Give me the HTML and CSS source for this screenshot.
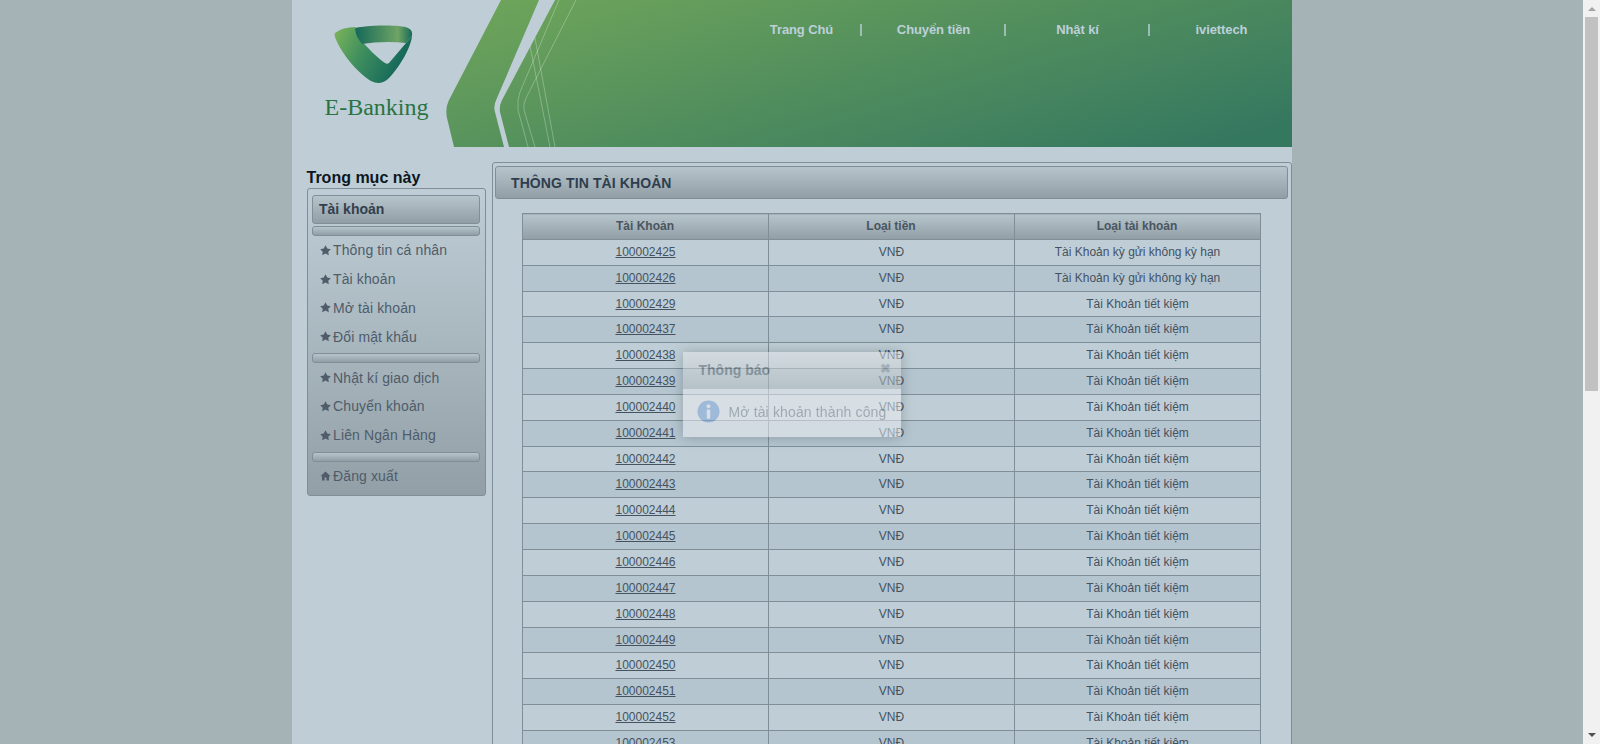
FILE: index.html
```html
<!DOCTYPE html>
<html lang="en">
<head>
  <meta charset="UTF-8" />
  <title>E-Banking</title>
  <link rel="stylesheet" href="styles.css">
</head>
<body>

  <div class="viewport">
    <div class="wrap">

      <!-- Header -->
      <header class="header">
        <svg class="header-art" viewBox="0 0 1000 147" aria-hidden="true">
          <defs>
            <linearGradient id="headGrad" gradientUnits="userSpaceOnUse" x1="190" y1="-10" x2="285" y2="325">
              <stop offset="0" stop-color="#70a65a"/>
              <stop offset="1" stop-color="#357860"/>
            </linearGradient>
          </defs>
          <path fill="url(#headGrad)" d="M209 0H247L205 98Q201 106 203 112L212 147H162L155 118Q153 108 157 100Z"/>
          <path fill="url(#headGrad)" d="M263 0H1000V147H217L208 112Q207 106 210 100Z"/>
          <g fill="none" stroke="#fff" stroke-opacity=".28" stroke-width="1">
            <path d="M267 0L228 92Q225 100 226 110L236 147"/>
            <path d="M284 0L234 98Q231 104 232 110L243 147"/>
            <path d="M243 38L263 147"/>
            <path d="M238 46L258 147"/>
          </g>
        </svg>

        <div class="brand">
          <svg class="logo" viewBox="0 0 100 70" aria-hidden="true">
            <defs>
              <linearGradient id="logoA" x1="0" y1="0" x2="1" y2=".35">
                <stop offset="0" stop-color="#7db55a"/>
                <stop offset=".45" stop-color="#3f8f5e"/>
                <stop offset="1" stop-color="#136659"/>
              </linearGradient>
              <linearGradient id="logoB" x1="0" y1="0" x2="1" y2="0">
                <stop offset="0" stop-color="#14685a"/>
                <stop offset=".75" stop-color="#6ea464"/>
                <stop offset="1" stop-color="#17695a"/>
              </linearGradient>
            </defs>
            <path fill="url(#logoA)" d="M10 14Q17 8 31 8L30 12C33 18 45 33 60 44Q62 45.500 64 44L81 24L87 17C86 28 75 48 63 60Q55 67 46 62C34 55 16 35 10 18Q9 15 10 14Z"/>
            <path fill="url(#logoB)" d="M30 10Q31 8 36 8C55 6 75 6 83 9Q88 11 87 17L81 24C65 22 50 23 37 25Q30 16 30 10Z"/>
          </svg>
          <div class="brand-name">E-Banking</div>
        </div>

        <nav class="topnav">
          <a href="#">Trang Chú</a>
          <a href="#">Chuyển tiền</a>
          <a href="#">Nhật kí</a>
          <a href="#">iviettech</a>
        </nav>
      </header>

      <div class="content">

        <!-- Sidebar -->
        <aside class="sidebar">
          <h3>Trong mục này</h3>
          <div class="side-box">
            <div class="side-title">Tài khoản</div>
            <div class="side-bar"></div>
            <a class="side-link" href="#"><svg class="ico" viewBox="0 0 12 12"><path d="M6 .3L7.900 3.900L11.800 4.500L9 7.300L9.600 11.300L6 9.400L2.400 11.300L3 7.300L.2 4.500L4.100 3.900Z"/></svg>Thông tin cá nhân</a>
            <a class="side-link" href="#"><svg class="ico" viewBox="0 0 12 12"><path d="M6 .3L7.900 3.900L11.800 4.500L9 7.300L9.600 11.300L6 9.400L2.400 11.300L3 7.300L.2 4.500L4.100 3.900Z"/></svg>Tài khoản</a>
            <a class="side-link" href="#"><svg class="ico" viewBox="0 0 12 12"><path d="M6 .3L7.900 3.900L11.800 4.500L9 7.300L9.600 11.300L6 9.400L2.400 11.300L3 7.300L.2 4.500L4.100 3.900Z"/></svg>Mở tài khoản</a>
            <a class="side-link" href="#"><svg class="ico" viewBox="0 0 12 12"><path d="M6 .3L7.900 3.900L11.800 4.500L9 7.300L9.600 11.300L6 9.400L2.400 11.300L3 7.300L.2 4.500L4.100 3.900Z"/></svg>Đổi mật khẩu</a>
            <div class="side-bar"></div>
            <a class="side-link" href="#"><svg class="ico" viewBox="0 0 12 12"><path d="M6 .3L7.900 3.900L11.800 4.500L9 7.300L9.600 11.300L6 9.400L2.400 11.300L3 7.300L.2 4.500L4.100 3.900Z"/></svg>Nhật kí giao dịch</a>
            <a class="side-link" href="#"><svg class="ico" viewBox="0 0 12 12"><path d="M6 .3L7.900 3.900L11.800 4.500L9 7.300L9.600 11.300L6 9.400L2.400 11.300L3 7.300L.2 4.500L4.100 3.900Z"/></svg>Chuyển khoản</a>
            <a class="side-link" href="#"><svg class="ico" viewBox="0 0 12 12"><path d="M6 .3L7.900 3.900L11.800 4.500L9 7.300L9.600 11.300L6 9.400L2.400 11.300L3 7.300L.2 4.500L4.100 3.900Z"/></svg>Liên Ngân Hàng</a>
            <div class="side-bar"></div>
            <a class="side-link" href="#"><svg class="ico" viewBox="0 0 12 12"><path d="M6 1.500L11.500 6.800H9.800V11.500H7V8.300H5V11.500H2.200V6.800H.5Z"/></svg>Đăng xuất</a>
          </div>
        </aside>

        <!-- Account list -->
        <section class="panel">
          <h2 class="panel-head">THÔNG TIN TÀI KHOẢN</h2>
          <table class="accounts">
            <thead>
              <tr><th>Tài Khoản</th><th>Loại tiền</th><th>Loại tài khoản</th></tr>
            </thead>
            <tbody>
              <tr><td><a href="#">100002425</a></td><td>VNĐ</td><td>Tài Khoản kỳ gửi không kỳ hạn</td></tr>
              <tr><td><a href="#">100002426</a></td><td>VNĐ</td><td>Tài Khoản kỳ gửi không kỳ hạn</td></tr>
              <tr><td><a href="#">100002429</a></td><td>VNĐ</td><td>Tài Khoản tiết kiệm</td></tr>
              <tr><td><a href="#">100002437</a></td><td>VNĐ</td><td>Tài Khoản tiết kiệm</td></tr>
              <tr><td><a href="#">100002438</a></td><td>VNĐ</td><td>Tài Khoản tiết kiệm</td></tr>
              <tr><td><a href="#">100002439</a></td><td>VNĐ</td><td>Tài Khoản tiết kiệm</td></tr>
              <tr><td><a href="#">100002440</a></td><td>VNĐ</td><td>Tài Khoản tiết kiệm</td></tr>
              <tr><td><a href="#">100002441</a></td><td>VNĐ</td><td>Tài Khoản tiết kiệm</td></tr>
              <tr><td><a href="#">100002442</a></td><td>VNĐ</td><td>Tài Khoản tiết kiệm</td></tr>
              <tr><td><a href="#">100002443</a></td><td>VNĐ</td><td>Tài Khoản tiết kiệm</td></tr>
              <tr><td><a href="#">100002444</a></td><td>VNĐ</td><td>Tài Khoản tiết kiệm</td></tr>
              <tr><td><a href="#">100002445</a></td><td>VNĐ</td><td>Tài Khoản tiết kiệm</td></tr>
              <tr><td><a href="#">100002446</a></td><td>VNĐ</td><td>Tài Khoản tiết kiệm</td></tr>
              <tr><td><a href="#">100002447</a></td><td>VNĐ</td><td>Tài Khoản tiết kiệm</td></tr>
              <tr><td><a href="#">100002448</a></td><td>VNĐ</td><td>Tài Khoản tiết kiệm</td></tr>
              <tr><td><a href="#">100002449</a></td><td>VNĐ</td><td>Tài Khoản tiết kiệm</td></tr>
              <tr><td><a href="#">100002450</a></td><td>VNĐ</td><td>Tài Khoản tiết kiệm</td></tr>
              <tr><td><a href="#">100002451</a></td><td>VNĐ</td><td>Tài Khoản tiết kiệm</td></tr>
              <tr><td><a href="#">100002452</a></td><td>VNĐ</td><td>Tài Khoản tiết kiệm</td></tr>
              <tr><td><a href="#">100002453</a></td><td>VNĐ</td><td>Tài Khoản tiết kiệm</td></tr>
            </tbody>
          </table>
        </section>
      </div>
    </div>

    <!-- Notification dialog -->
    <div class="modal">
      <div class="modal-head">
        <span>Thông báo</span>
        <span class="modal-close">&#10006;</span>
      </div>
      <div class="modal-body">
        <svg class="info" viewBox="0 0 24 24" aria-hidden="true">
          <circle cx="12" cy="12" r="11.500" fill="#7fa6dc"/>
          <circle cx="12" cy="6.500" r="2" fill="#eef3f8"/>
          <rect x="10.200" y="10" width="3.600" height="9.500" fill="#eef3f8"/>
        </svg>
        <span>Mở tài khoản thành công</span>
      </div>
    </div>
  </div>

  <!-- Scrollbar -->
  <div class="scrollbar">
    <div class="arrow arrow-up"></div>
    <div class="thumb"></div>
    <div class="arrow arrow-down"></div>
  </div>

</body>
</html>
```

FILE: styles.css
```css
* { box-sizing: border-box; margin: 0; padding: 0; }
html, body { height: 100%; overflow: hidden; }
body { display: flex; background: #a5b3b7; font-family: "Liberation Sans", Arial, sans-serif; color: #45525f; }
a { color: inherit; text-decoration: none; }

.viewport { flex: 1; position: relative; height: 744px; overflow: hidden; }
.wrap { width: 1000px; height: 100%; margin: 0 auto; background: #bfced6; }

/* Header */
.header { position: relative; display: flex; height: 147px; }
.header-art { position: absolute; left: 0; top: 0; width: 1000px; height: 147px; }
.brand { position: relative; width: 427px; padding: 19px 0 0 33px; }
.logo { display: block; width: 100px; height: 70px; }
.brand-name { margin-top: 3px; font: 24px/30px "Liberation Serif", serif; color: #2a7343; }
.topnav { position: relative; display: grid; grid-template-columns: 144px 144px 144px 142px; align-self: flex-start; margin-top: 24px; }
.topnav a { height: 12px; padding-left: 2px; font-size: 13px; font-weight: bold; letter-spacing: -.1px; line-height: 12px; text-align: center; color: #bdd0da; border-right: 2px solid rgba(189, 208, 218, .7); }
.topnav a:first-child { padding-left: 26px; }
.topnav a:last-child { border-right: 0; }

.content { display: grid; grid-template-columns: 179px 800px; column-gap: 6px; padding: 15px 0 0 15px; }

/* Sidebar */
.sidebar h3 { height: 26px; padding-top: 6px; font-size: 16px; line-height: 20px; color: #0c1722; }
.side-box { height: 308px; padding: 6px 4.5px 0; background: linear-gradient(#bfced6, #929fa7); border: 1px solid #7f8e97; border-radius: 3px; }
.side-title { height: 29px; padding-left: 6px; font-size: 14px; font-weight: bold; line-height: 27px; color: #333f4c; background: linear-gradient(#b6c4cc, #919ea6); border: 1px solid #7f8e97; border-radius: 3px; }
.side-bar { height: 10px; margin-top: 2px; background: linear-gradient(#b6c4cc, #919ea6); border: 1px solid #7f8e97; border-radius: 3px; }
.side-link { display: flex; align-items: center; height: 28.8px; padding-left: 8px; font-size: 14px; letter-spacing: .12px; color: #4f5c6a; }
.ico { width: 11px; height: 11px; margin-right: 2px; fill: #4f5c6a; }

/* Account list */
.panel { height: 600px; padding: 3px 3px 0 2.5px; background: #bfced6; border: 1px solid #7f8e97; border-radius: 3px; }
.panel-head { height: 33px; padding-left: 15px; font-size: 14px; letter-spacing: .1px; line-height: 33px; color: #2f3e4e; background: linear-gradient(#b6c4cc, #919ea6); border: 1px solid #7f8e97; border-radius: 3px; }
.accounts { width: 739px; margin: 14px 0 0 26.5px; border-collapse: collapse; table-layout: fixed; font-size: 12px; text-align: center; }
.accounts th, .accounts td { padding: 4px 0; line-height: 16.84px; border: 1px solid #7f8e97; }
.accounts td { padding-left: 1px; }
.accounts th { color: #4a5560; background: linear-gradient(#b6c4cc, #919ea6); }
.accounts tbody tr:nth-child(even) { background: #b4c5d0; }
.accounts a { text-decoration: underline; }

/* Dialog */
.modal { position: absolute; top: 352px; left: 50%; width: 218px; height: 85px; margin-left: -109px; background: #eef0f2; opacity: .5; box-shadow: 0 0 12px rgba(0, 0, 0, .45); }
.modal-head { display: flex; justify-content: space-between; height: 37px; padding: 10px 10px 0 16px; font-size: 14px; font-weight: bold; color: #556069; background: linear-gradient(#e5e8ea, #b7bec0); }
.modal-close { margin-top: -1px; font-size: 13px; color: #8b949b; }
.modal-body { display: flex; align-items: center; gap: 9px; padding: 11px 0 0 14px; font-size: 14px; letter-spacing: .14px; color: #7d858c; }
.info { width: 23px; height: 23px; flex-shrink: 0; }

/* Scrollbar */
.scrollbar { display: flex; flex-direction: column; align-items: center; justify-content: flex-start; flex: 0 0 17px; height: 744px; background: #f1f1f1; }
.arrow { width: 0; height: 0; border-left: 4px solid transparent; border-right: 4px solid transparent; }
.arrow-up { margin-top: 7px; border-bottom: 4px solid #a3a3a3; }
.arrow-down { margin-top: 342px; border-top: 4px solid #505050; }
.thumb { width: 13px; height: 374px; margin-top: 6px; background: #c1c1c1; }
```
